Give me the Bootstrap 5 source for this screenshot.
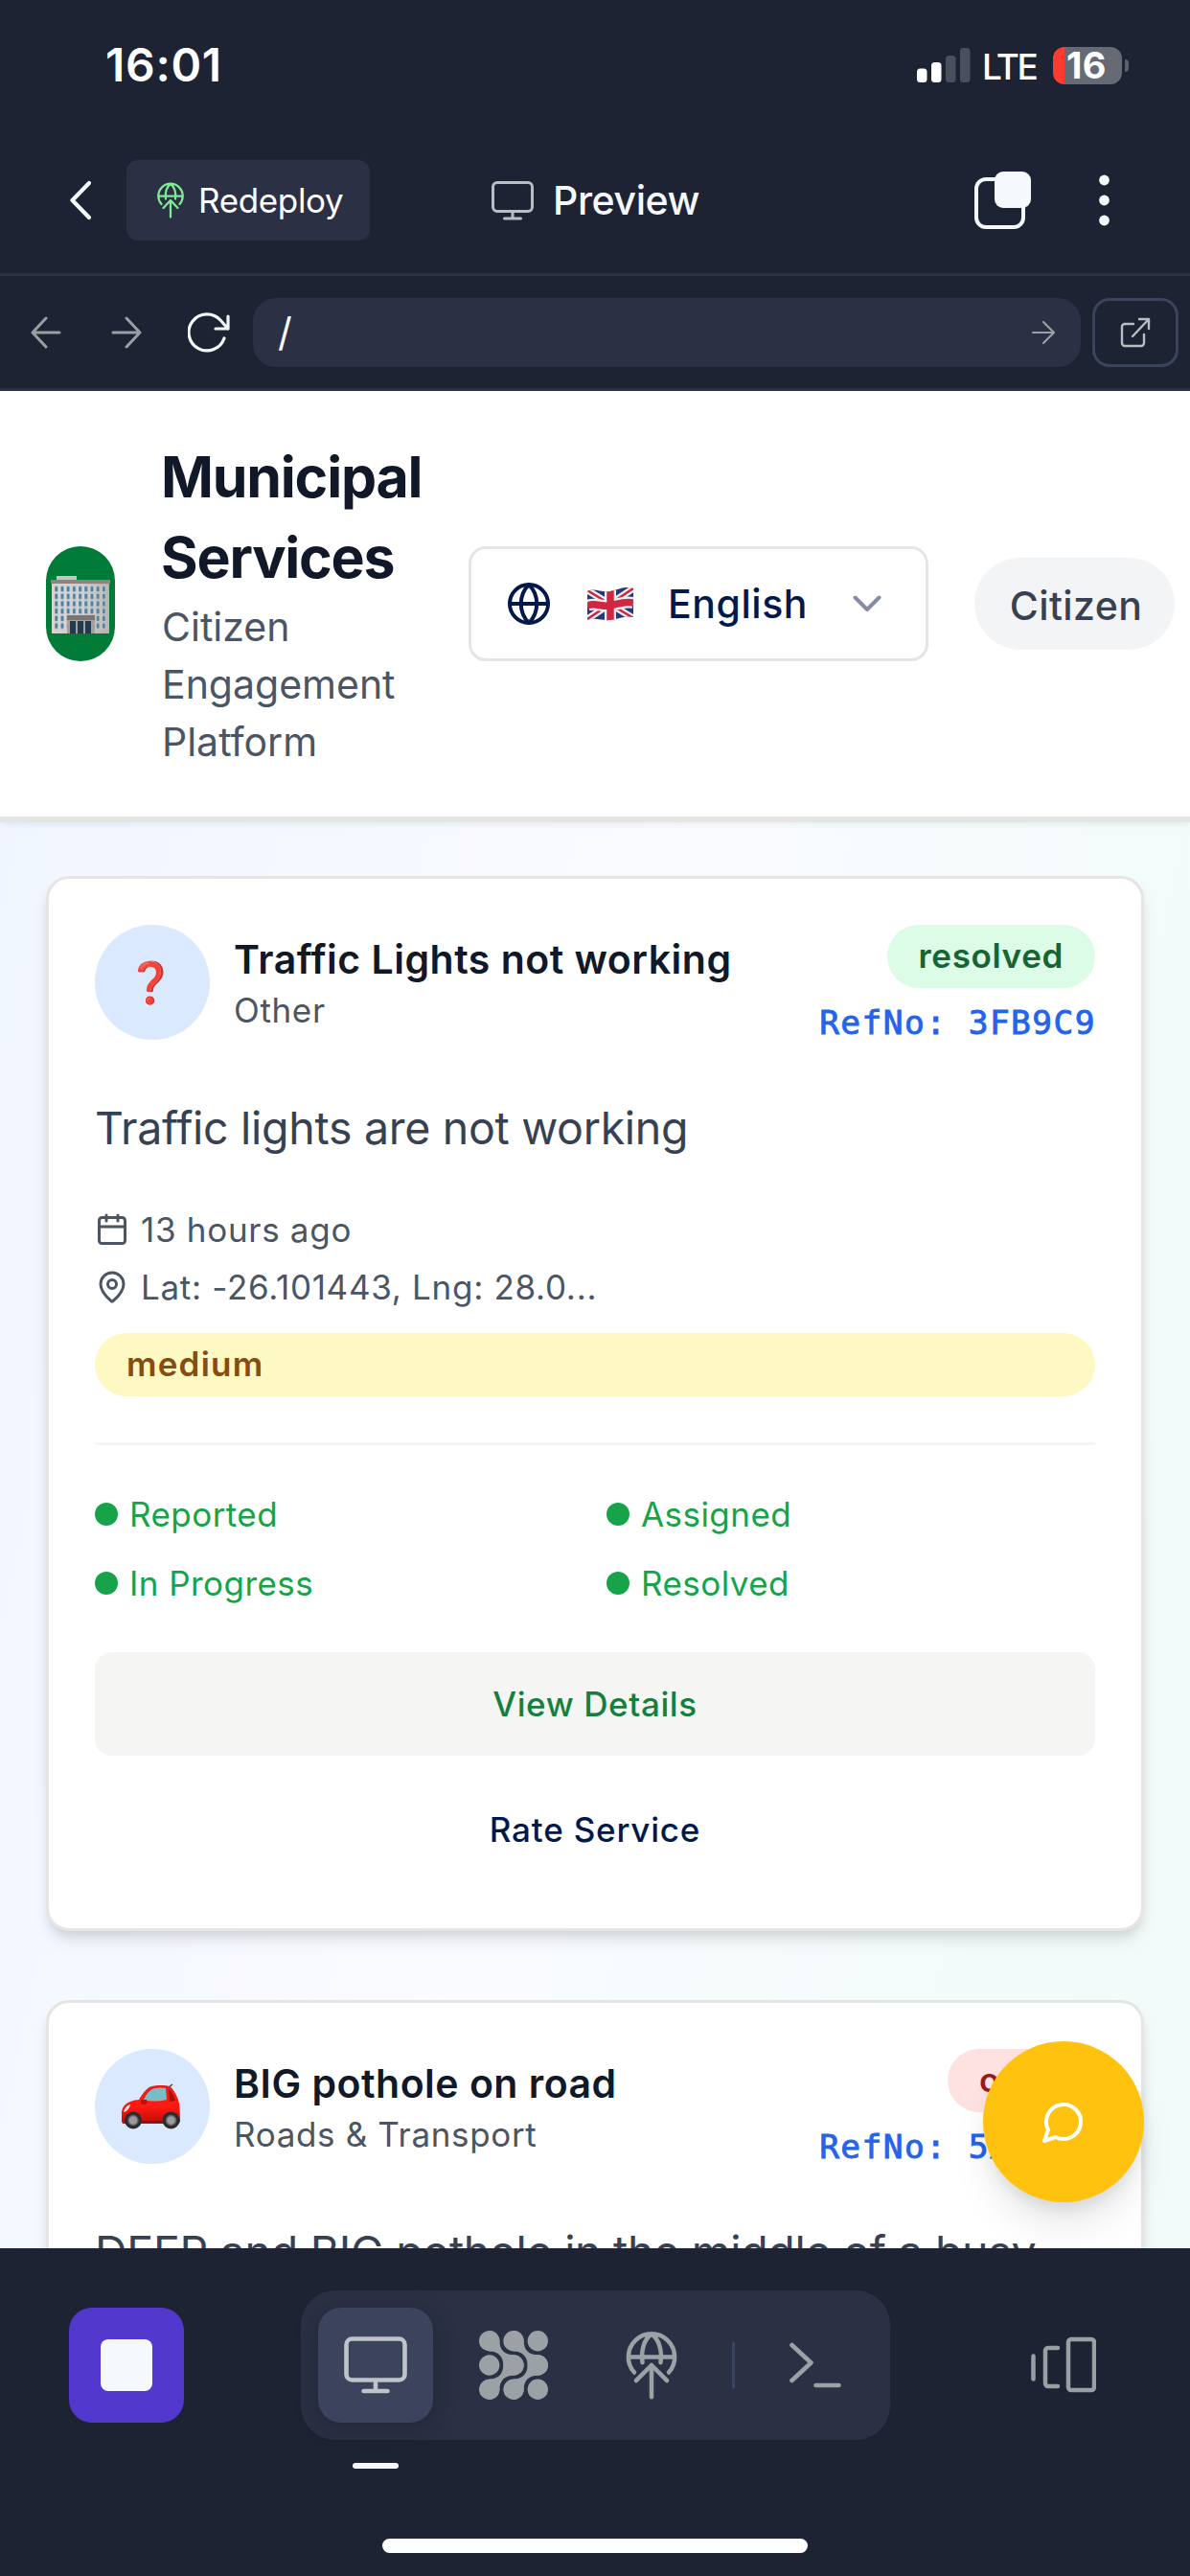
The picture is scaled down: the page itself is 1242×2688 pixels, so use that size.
<!DOCTYPE html>
<html lang="en">
<head>
<meta charset="utf-8">
<meta name="viewport" content="width=device-width, initial-scale=1">
<title>Municipal Services – Preview</title>
<link rel="stylesheet" href="https://cdn.jsdelivr.net/npm/bootstrap@5.3.0/dist/css/bootstrap.min.css">
<style>
  html, body { height: 100%; overflow: hidden; }
  body { width: 1242px; height: 2688px; background: #1d2332; font-family: Inter, "Liberation Sans", sans-serif; color: #111827; }
  svg { display: block; flex: none; }
  .ico { fill: none; stroke: currentColor; stroke-linecap: round; stroke-linejoin: round; }

  /* phone status bar */
  .status-bar { height: 136px; padding: 0 64px 0 110px; color: #fff; }
  .clock { font-size: 48px; font-weight: 600; letter-spacing: .7px; line-height: 1; }
  .network { width: 60px; font-size: 37px; font-weight: 500; letter-spacing: -2.6px; line-height: 1; margin: 2px 14px 0 12px; }
  .battery { width: 72px; height: 39px; border-radius: 12px; padding-left: 14px; font-size: 38px; font-weight: 700; letter-spacing: .4px; line-height: 39px; background: linear-gradient(90deg, #ff3b30 12px, #666a74 12px); }
  .battery-tip { width: 4px; height: 13px; margin-left: 3px; border-radius: 0 5px 5px 0; background: #5c606b; }

  /* app header */
  .app-head { height: 152px; padding: 0 84px 3px 73px; border-bottom: 3px solid #2b3044; color: #f5f8fc; }
  .redeploy { width: 254px; height: 84px; margin-left: 37px; padding: 0 0 0 31px; gap: 15px; border-radius: 12px; background: #2b3044; font-size: 35px; letter-spacing: -.35px; line-height: 1; }
  .leaf { color: #7cec8f; }
  .silver { color: #b9bec2; }
  .head-title { margin-left: 127px; gap: 20px; font-size: 41px; font-weight: 500; letter-spacing: -.4px; line-height: 1; }
  .tool-row { height: 120px; padding: 0 12px 0 32px; border-bottom: 3px solid #2b3044; color: #f5f8fc; }
  .dim { color: #9a9fa4; }
  .address { width: 864px; height: 72px; margin-left: 24px; padding: 0 26px; border-radius: 24px; background: #2b3044; font-size: 41px; line-height: 1; }
  .open-ext { width: 90px; height: 72px; margin-left: 12px; border: 3px solid #3c435c; border-radius: 18px; color: #b9bec2; }

  /* previewed site */
  .site { height: 1938px; overflow: hidden; background: linear-gradient(102deg, #eff5ff 0%, #fafbff 50%, #f4fbfb 80%, #f2fbf9 100%); }
  .site-head { height: 450px; padding: 0 16px 0 48px; background: #fff; border-bottom: 6px solid #e5e5e4; box-shadow: 0 3px 6px rgba(0,0,0,.06); position: relative; }
  .crest { width: 72px; height: 120px; border-radius: 36px; background: #007a37; overflow: hidden; flex: none; }
  .brand { width: 272px; margin-left: 49px; }
  .brand h1 { margin: 0 0 0 -1px; font-size: 59px; font-weight: 700; letter-spacing: -1.2px; line-height: 84px; }
  .brand p { margin: 0; font-size: 41px; line-height: 60px; color: #4b5563; }
  .lang { width: 480px; height: 120px; margin-left: 48px; padding: 0 46px 0 38px; border: 3px solid #e5e5e5; border-radius: 18px; color: #03194b; font-size: 41px; font-weight: 500; letter-spacing: .55px; line-height: 1; }
  .role { width: 209px; height: 96px; margin-left: 48px; padding-left: 3px; border-radius: 48px; background: #f3f4f6; color: #374151; font-size: 41px; font-weight: 500; letter-spacing: .4px; line-height: 100px; }

  .ticket { height: 1101px; margin: 0 48px 72px; padding: 48px; border: 3px solid #e7e5e4; border-radius: 24px; background: #fff; box-shadow: 0 12px 18px -3px rgba(0,0,0,.1), 0 6px 12px -4px rgba(0,0,0,.1); }
  .avatar-dot { width: 120px; height: 120px; border-radius: 50%; background: #dbe9fe; font-size: 42px; line-height: 1; }
  .avatar-dot svg, .glyph { margin-right: 4px; }
  .ticket h2 { margin: 6px 0 0; font-size: 41px; font-weight: 600; letter-spacing: .5px; line-height: 60px; white-space: nowrap; }
  .kind { font-size: 35px; line-height: 46px; letter-spacing: .65px; color: #4b5563; }
  .pill { height: 66px; padding: 0 33px; border-radius: 33px; font-size: 35px; font-weight: 600; letter-spacing: .65px; line-height: 65px; }
  .pill-ok { background: #dcfce7; color: #166534; }
  .pill-open { background: #fee2e2; color: #991b1b; width: 154px; }
  .pill-mid { background: #fef8c3; color: #854d0e; letter-spacing: 1.2px; margin-top: 18px; }
  .ref { font: 34.5px/48px "DejaVu Sans Mono", monospace; letter-spacing: 1.45px; color: #2563eb; -webkit-text-stroke: .9px #2563eb; margin: 12px -1px 0 0; white-space: pre; }
  .story { margin: 47px 0 0; font-size: 46.5px; line-height: 78px; letter-spacing: -.3px; color: #374151; white-space: nowrap; }
  .facts { height: 60px; gap: 12px; font-size: 35px; color: #4b5563; line-height: 1; letter-spacing: .7px; }
  .steps { margin-top: 48px; padding-top: 36px; border-top: 3px solid #f5f5f5; color: #16a34a; font-size: 35px; letter-spacing: .45px; }
  .steps .col-6 { height: 72px; gap: 12px; line-height: 1; }
  .steps .col-6::before { content: ""; width: 24px; height: 24px; border-radius: 50%; background: #16a34a; }
  .steps .row { --bs-gutter-x: 24px; }
  .wide-btn { height: 108px; border: 0; border-radius: 18px; font-size: 35px; font-weight: 500; letter-spacing: .6px; line-height: 1; padding: 0; }
  .details { background: #f5f5f4; color: #15803d; margin-top: 36px; }
  .rate { color: #03194b; letter-spacing: .8px; margin-top: 23px; }
  .chat-fab { position: absolute; left: 1026px; top: 2130px; width: 168px; height: 168px; border-radius: 50%; background: #ffc20f; color: #fff; box-shadow: 0 30px 45px -9px rgba(0,0,0,.1), 0 12px 18px -6px rgba(0,0,0,.1); }

  /* bottom workspace bar */
  .dock { position: relative; z-index: 2; height: 342px; padding: 44px 98px 0 72px; background: #1d2332; }
  .tile { width: 120px; height: 120px; border-radius: 24px; flex: none; }
  .stop { background: #5238cc; }
  .stop span { width: 54px; height: 54px; border-radius: 8px; background: #f5f8fc; }
  .tabs { width: 615px; height: 156px; margin-left: 122px; padding: 0 18px; border-radius: 36px; background: #2b3044; color: #9ca1a5; }
  .tile-on { background: #3c435c; color: #bfc4c8; box-shadow: 0 6px 24px rgba(15,20,32,.3); }
  .split { width: 3px; height: 48px; margin: 0 24px 0 24px; background: #3c435c; }
  .marker { width: 48px; height: 6px; margin: 24px 0 0 296px; border-radius: 3px; background: #f5f8fc; }
  .home-bar { width: 444px; height: 15px; margin: 73px 0 0 327px; border-radius: 8px; background: #fff; }
</style>
</head>
<body class="d-flex flex-column">

<div class="status-bar d-flex align-items-center justify-content-between">
  <span class="clock">16:01</span>
  <div class="d-flex align-items-center">
    <svg width="56" height="36" viewBox="0 0 56 36" fill="#fff"><rect y="21.500" width="10.500" height="14.500" rx="3.500"/><rect x="15" y="15" width="10.500" height="21" rx="3.500"/><g fill="#4a4f5d"><rect x="30" y="8" width="10.500" height="28" rx="3.500"/><rect x="45" width="10.500" height="36" rx="3.500"/></g></svg>
    <span class="network">LTE</span>
    <div class="battery">16</div><div class="battery-tip"></div>
  </div>
</div>

<header class="app-head d-flex align-items-center">
  <svg class="ico" width="22" height="42" viewBox="0 0 22 42" stroke-width="4.200"><path d="M20 3 2.500 21 20 39"/></svg>
  <button class="redeploy btn d-flex align-items-center text-white" type="button">
    <svg class="ico leaf" width="28" height="38" viewBox="0 0 56 76" stroke-width="4.500"><path d="M9 46A25.500 25.500 0 1 1 47 46M3 29h50M18 35C16 22 20 9 28 4c8 5 12 18 10 31M28 38v35M13 54l15-16 15 16"/></svg>
    <span>Redeploy</span>
  </button>
  <div class="head-title d-flex align-items-center">
    <svg class="ico silver" width="44" height="41" viewBox="0 0 44 41" stroke-width="3"><rect x="1.500" y="1.500" width="41" height="30" rx="4.500"/><path d="M22 32v7M13.500 39h17"/></svg>
    <span>Preview</span>
  </div>
  <div class="d-flex align-items-center ms-auto">
    <svg width="59" height="60" viewBox="0 0 59 60"><rect x="2" y="8" width="49" height="50" rx="10" fill="none" stroke="#f5f8fc" stroke-width="4"/><rect x="21" y="0" width="38" height="38" rx="9" fill="#f5f8fc"/></svg>
    <svg width="11" height="54" viewBox="0 0 11 54" fill="#f5f8fc" style="margin-left:71px"><circle cx="5.500" cy="6" r="5.400"/><circle cx="5.500" cy="27" r="5.400"/><circle cx="5.500" cy="48" r="5.400"/></svg>
  </div>
</header>

<div class="tool-row d-flex align-items-center">
  <svg class="ico dim" width="32" height="34" viewBox="0 0 32 34" stroke-width="3"><path d="M30 17H2M16 2 2 17l14 15"/></svg>
  <svg class="ico dim" width="32" height="34" viewBox="0 0 32 34" stroke-width="3" style="margin-left:52px"><path d="M2 17h28M16 2l14 15-14 15"/></svg>
  <svg class="ico" width="44" height="42" viewBox="0 0 44 42" stroke-width="3.200" style="margin-left:48px"><path d="M38 27A19 19 0 1 1 34 8l8 9M42 4v13H29"/></svg>
  <div class="address d-flex align-items-center justify-content-between"><span>/</span>
    <svg class="ico dim" width="26" height="26" viewBox="0 0 26 26" stroke-width="2.200"><path d="M2 13h22M13 2l11 11-11 11"/></svg>
  </div>
  <button class="open-ext btn d-flex align-items-center justify-content-center p-0" type="button">
    <svg class="ico" width="32" height="32" viewBox="0 0 32 32" stroke-width="2.400"><path d="M14 7H5a3 3 0 0 0-3 3v17a3 3 0 0 0 3 3h17a3 3 0 0 0 3-3V18M20 2h10v10M30 2 13 20"/></svg>
  </button>
</div>

<main class="site">
  <div class="site-head d-flex align-items-center">
    <div class="crest d-flex justify-content-center">
      <svg width="64" height="120" viewBox="0 0 64 120">
        <defs>
          <linearGradient id="wall" x1="0" x2="1"><stop offset="0" stop-color="#d9d4d0"/><stop offset=".5" stop-color="#cfccca"/><stop offset="1" stop-color="#b5b2b1"/></linearGradient>
          <pattern id="panes" width="6.200" height="7.700" patternUnits="userSpaceOnUse" x="4.300" y="41.300"><rect x=".3" width="4.400" height="6.600" fill="#e6e3e0"/><rect x="1" y=".5" width="3" height="5.600" fill="#4d7f9f"/></pattern>
        </defs>
        <rect x="7" y="31" width="21" height="5" fill="#c9c4c0"/>
        <rect x="2" y="37" width="60" height="54" fill="url(#wall)"/>
        <rect x="1" y="35" width="62" height="4" fill="#8d8482"/>
        <rect x="4.300" y="41.300" width="55.800" height="46.200" fill="url(#panes)"/>
        <rect x="18" y="73" width="29" height="18" fill="#a5a09f"/>
        <rect x="18" y="72" width="29" height="5" fill="#7d7473"/>
        <path d="M21 78h6v13h-6zM29 78h6v13h-6zM37 78h6v13h-6z" fill="#1f3b4b"/>
      </svg>
    </div>
    <div class="brand">
      <h1>Municipal<br>Services</h1>
      <p>Citizen<br>Engagement<br>Platform</p>
    </div>
    <div class="lang d-flex align-items-center">
      <svg class="ico" width="44" height="44" viewBox="0 0 44 44" stroke-width="4"><circle cx="22" cy="22" r="20"/><path d="M2 22h40M22 2c-11 11-11 29 0 40 11-11 11-29 0-40z"/></svg>
      <svg width="48" height="35" viewBox="0 0 48 35" style="margin-left:39px">
        <defs><clipPath id="wave"><path d="M0 4C8 0 15 6 24 4S40-2 48 1v30c-9-2-16 2-24 3S8 31 0 34z"/></clipPath></defs>
        <g clip-path="url(#wave)">
          <rect width="48" height="35" fill="#26377b"/>
          <path d="M0 3 48 32M0 33 48 1" stroke="#f2f2f6" stroke-width="7"/>
          <path d="M0 3 48 32M0 33 48 1" stroke="#d0263f" stroke-width="2.600"/>
          <path d="M24 0v35M0 19c8-4 15 2 24 0s15-5 24-3" stroke="#f2f2f6" stroke-width="12" fill="none"/>
          <path d="M24 0v35M0 19c8-4 15 2 24 0s15-5 24-3" stroke="#d0263f" stroke-width="7.500" fill="none"/>
        </g>
      </svg>
      <span style="margin-left:36px">English</span>
      <svg class="ico ms-auto" width="30" height="18" viewBox="0 0 30 18" stroke-width="4" style="color:#858ba8"><path d="M2.500 2.500 15 15 27.500 2.500"/></svg>
    </div>
    <div class="role text-center">Citizen</div>
  </div>

  <article class="ticket" style="margin-top:56px">
    <div class="d-flex">
      <div class="avatar-dot d-flex align-items-center justify-content-center"><span class="glyph">&#10067;</span></div>
      <div style="margin-left:25px"><h2>Traffic Lights not working</h2><div class="kind">Other</div></div>
      <div class="d-flex flex-column align-items-end ms-auto"><span class="pill pill-ok">resolved</span><span class="ref">RefNo: 3FB9C9</span></div>
    </div>
    <p class="story">Traffic lights are not working</p>
    <div class="facts d-flex align-items-center" style="margin-top:37px">
      <svg class="ico" width="36" height="36" viewBox="0 0 36 36" stroke-width="3"><rect x="4.500" y="5.500" width="27" height="27" rx="3"/><path d="M12 3v6M24 3v6M4.500 15h27"/></svg><span>13 hours ago</span>
    </div>
    <div class="facts d-flex align-items-center">
      <svg class="ico" width="36" height="36" viewBox="0 0 24 24" stroke-width="2"><path d="M20 10c0 4.990-5.540 10.190-7.400 11.800a1 1 0 0 1-1.200 0C9.540 20.190 4 14.990 4 10a8 8 0 0 1 16 0z"/><circle cx="12" cy="10" r="3"/></svg><span>Lat: -26.101443, Lng: 28.0...</span>
    </div>
    <div class="pill pill-mid">medium</div>
    <div class="steps"><div class="row">
      <div class="col-6 d-flex align-items-center">Reported</div><div class="col-6 d-flex align-items-center">Assigned</div>
      <div class="col-6 d-flex align-items-center">In Progress</div><div class="col-6 d-flex align-items-center">Resolved</div>
    </div></div>
    <button class="btn wide-btn details w-100" type="button">View Details</button>
    <button class="btn wide-btn rate w-100" type="button">Rate Service</button>
  </article>

  <article class="ticket">
    <div class="d-flex">
      <div class="avatar-dot d-flex align-items-center justify-content-center">
        <svg width="62" height="48" viewBox="0 0 62 48">
          <defs><linearGradient id="paint" x2="0" y2="1"><stop offset="0" stop-color="#e91c17"/><stop offset=".55" stop-color="#ff1a10"/><stop offset="1" stop-color="#b80d0a"/></linearGradient></defs>
          <path d="m50 4 4-3" stroke="#444" stroke-width="1.500"/>
          <path d="M1 31c0-7 5-13 18-14C24 9 28 3 35 2.500c6-.8 13-.6 17 1C58 10 61 18 61.500 24L62 39c0 2-1 3-3 3H4c-3 0-3-2-3-4z" fill="url(#paint)"/>
          <path d="M24 17c3-6 6-11 12-12 4-.8 8-.6 11 0l1 12c-8 2-16 2-24 0z" fill="#78bcc6"/>
          <path d="M50 6c4 3 6 8 7 12l-6 1z" fill="#a50f0d"/>
          <path d="M3 30c1-4 3-7 7-8-1 4-3 7-7 8z" fill="#ffe1dd"/>
          <path d="M21 17h6v4c-2 2-5 1-6-1z" fill="#c30b0b"/>
          <path d="M22 40h21" stroke="#8e0c0b" stroke-width="2"/>
          <g fill="#2c2b2d"><circle cx="13" cy="38.500" r="9"/><circle cx="52.500" cy="38.500" r="9"/></g>
          <g fill="#9b9b9d" stroke="#636366" stroke-width="1.500"><circle cx="13" cy="38.500" r="5"/><circle cx="52.500" cy="38.500" r="5"/></g>
        </svg>
      </div>
      <div style="margin-left:25px"><h2>BIG pothole on road</h2><div class="kind">Roads &amp; Transport</div></div>
      <div class="d-flex flex-column align-items-end ms-auto"><span class="pill pill-open">open</span><span class="ref">RefNo: 5A41D7</span></div>
    </div>
    <p class="story">DEEP and BIG pothole in the middle of a busy</p>
  </article>
</main>

<button class="chat-fab btn d-flex align-items-center justify-content-center p-0" type="button">
  <svg class="ico" width="48" height="48" viewBox="0 0 24 24" stroke-width="2"><path d="M7.900 20A9 9 0 1 0 4 16.100L2 22Z"/></svg>
</button>

<footer class="dock">
  <div class="d-flex align-items-center">
    <div class="tile stop d-flex align-items-center justify-content-center"><span></span></div>
    <div class="tabs d-flex align-items-center">
      <div class="tile tile-on d-flex align-items-center justify-content-center">
        <svg class="ico" width="66" height="60" viewBox="0 0 66 60" stroke-width="4.600"><rect x="2.500" y="2.500" width="61" height="43" rx="6"/><path d="M33 46v11M20.500 57h25"/></svg>
      </div>
      <div class="tile d-flex align-items-center justify-content-center" style="margin-left:24px">
        <svg width="72" height="72" viewBox="0 0 72 72" fill="currentColor">
          <circle cx="10.700" cy="10.700" r="10.700"/><circle cx="36" cy="10.700" r="10.700"/><circle cx="61.300" cy="10.700" r="10.700"/>
          <circle cx="10.700" cy="36" r="10.700"/><circle cx="36" cy="36" r="10.700"/><circle cx="61.300" cy="36" r="10.700"/>
          <circle cx="10.700" cy="61.300" r="10.700"/><circle cx="36" cy="61.300" r="10.700"/><circle cx="61.300" cy="61.300" r="10.700"/>
          <path d="M10.700 0A10.700 10.700 0 0 1 21.400 10.700C21.400 20 27 25.300 36 25.300A10.700 10.700 0 0 1 36 46.700C27 46.700 21.400 52 21.400 61.300A10.700 10.700 0 0 1 10.700 72V50.600C20 50.600 25.300 45 25.300 36S20 21.400 10.700 21.400z"/>
          <path d="M36 0A10.700 10.700 0 0 1 46.700 10.700C46.700 20 52 25.300 61.300 25.300A10.700 10.700 0 0 1 61.300 46.700C52 46.700 46.700 52 46.700 61.300A10.700 10.700 0 0 1 36 72V50.600C45 50.600 50.600 45 50.600 36S45 21.400 36 21.400z"/>
        </svg>
      </div>
      <div class="tile d-flex align-items-center justify-content-center" style="margin-left:24px">
        <svg class="ico" width="56" height="72" viewBox="0 0 56 76" stroke-width="4.800"><path d="M9 46A25.500 25.500 0 1 1 47 46M3 29h50M18 35C16 22 20 9 28 4c8 5 12 18 10 31M28 38v35M11 55l17-17 17 17"/></svg>
      </div>
      <div class="split"></div>
      <div class="tile d-flex align-items-center justify-content-center">
        <svg class="ico" width="54" height="48" viewBox="0 0 54 48" stroke-width="4.600"><path d="m2.500 3 20 18.500-20 18.500M27.500 45h24"/></svg>
      </div>
    </div>
    <svg class="ico ms-auto dim" width="68" height="60" viewBox="0 0 68 60" stroke-width="4.500"><path d="M2.500 20.500v24M28 12H18a3 3 0 0 0-3 3v34a3 3 0 0 0 3 3h10"/><rect x="39" y="3" width="27" height="53" rx="3"/></svg>
  </div>
  <div class="marker"></div>
  <div class="home-bar"></div>
</footer>

<script src="https://cdn.jsdelivr.net/npm/bootstrap@5.3.0/dist/js/bootstrap.bundle.min.js"></script>
</body>
</html>
